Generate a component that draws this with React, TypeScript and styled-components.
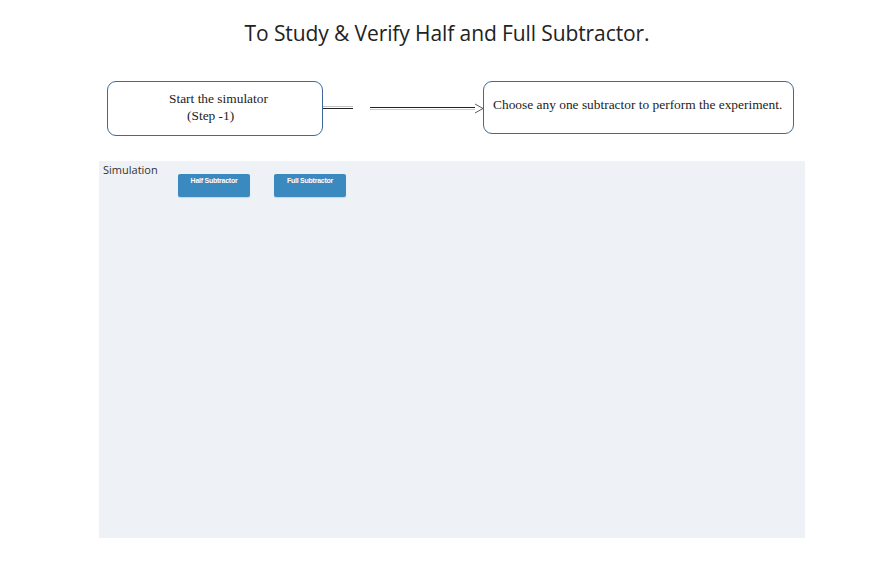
import React from 'react';
import styled, { createGlobalStyle } from 'styled-components';

const GlobalStyle = createGlobalStyle`
    html, body {
        margin: 0;
        padding: 0;
        background: #fff;
    }
    body {
        font-family: "Open Sans", "Liberation Sans", sans-serif;
    }
`;

const Page = styled.div`
    width: 884px;
    height: 569px;
    display: flex;
    flex-direction: column;
    overflow: hidden;
`;

const Title = styled.h1`
    margin: 19px 0 0;
    padding-left: 10px;
    height: 28px;
    font-size: 21px;
    font-weight: 400;
    color: #222;
    text-align: center;
    line-height: 28px;
    letter-spacing: -0.1px;
`;

const StepsRow = styled.div`
    display: flex;
    align-items: flex-start;
    margin: 34px 0 0 107px;
`;

const StepBox = styled.div<{ $width: number; $height: number }>`
    box-sizing: border-box;
    width: ${p => p.$width}px;
    height: ${p => p.$height}px;
    border: 1px solid #3f6a98;
    border-radius: 9px;
    font-family: "Liberation Serif", serif;
    font-size: 13.4px;
    color: #222;
    display: flex;
    flex-direction: column;
`;

const StartText = styled.div`
    padding: 8px 0 0 61px;
    line-height: 17px;
    white-space: nowrap;

    span {
        display: block;
        padding-left: 18px;
    }
`;

const ChooseText = styled.div`
    padding: 14px 0 0 9px;
    line-height: 17px;
    white-space: nowrap;
`;

const Connector = styled.svg`
    display: block;
    width: 160px;
    height: 54px;
`;

const Simulation = styled.section`
    margin: 25px 0 0 99px;
    width: 706px;
    height: 377px;
    background: #eef1f6;
    display: flex;
    align-items: flex-start;
    box-sizing: border-box;
`;

const SimLabel = styled.div`
    font-size: 11px;
    color: #333;
    padding: 1px 0 0 4px;
    width: 75px;
    line-height: 15px;
`;

const Buttons = styled.div`
    display: flex;
    gap: 24px;
    margin-top: 13px;
`;

const SimButton = styled.button`
    width: 72px;
    height: 23px;
    border: none;
    border-radius: 2px;
    background: #3a8abf;
    color: #fff;
    font-family: "Liberation Sans", Arial, sans-serif;
    font-size: 7px;
    font-weight: 700;
    letter-spacing: -0.25px;
    padding: 3px 0 0;
    display: flex;
    justify-content: center;
    align-items: flex-start;
    cursor: pointer;
    box-shadow: 0 1px 1px rgba(0, 0, 0, 0.12);
`;

export default function App() {
    return (
        <>
            <GlobalStyle />
            <Page>
                <Title>To Study &amp; Verify Half and Full Subtractor.</Title>
                <StepsRow>
                    <StepBox $width={216} $height={55}>
                        <StartText>
                            Start the simulator
                            <span>(Step -1)</span>
                        </StartText>
                    </StepBox>
                    <Connector viewBox="0 0 160 54">
                        <line x1="0" y1="27.5" x2="30" y2="27.5" stroke="#222" strokeWidth="1" />
                        <line x1="0" y1="25.5" x2="30" y2="25.5" stroke="#999" strokeWidth="0.6" />
                        <line x1="47" y1="26.5" x2="152" y2="26.5" stroke="#222" strokeWidth="1" />
                        <line x1="47" y1="28.5" x2="152" y2="28.5" stroke="#aaa" strokeWidth="0.6" />
                        <polyline points="152,23 160,27.5 152,32" fill="#fff" stroke="#333" strokeWidth="0.8" />
                    </Connector>
                    <StepBox $width={311} $height={53}>
                        <ChooseText>Choose any one subtractor to perform the experiment.</ChooseText>
                    </StepBox>
                </StepsRow>
                <Simulation>
                    <SimLabel>Simulation</SimLabel>
                    <Buttons>
                        <SimButton>Half Subtractor</SimButton>
                        <SimButton>Full Subtractor</SimButton>
                    </Buttons>
                </Simulation>
            </Page>
        </>
    );
}
